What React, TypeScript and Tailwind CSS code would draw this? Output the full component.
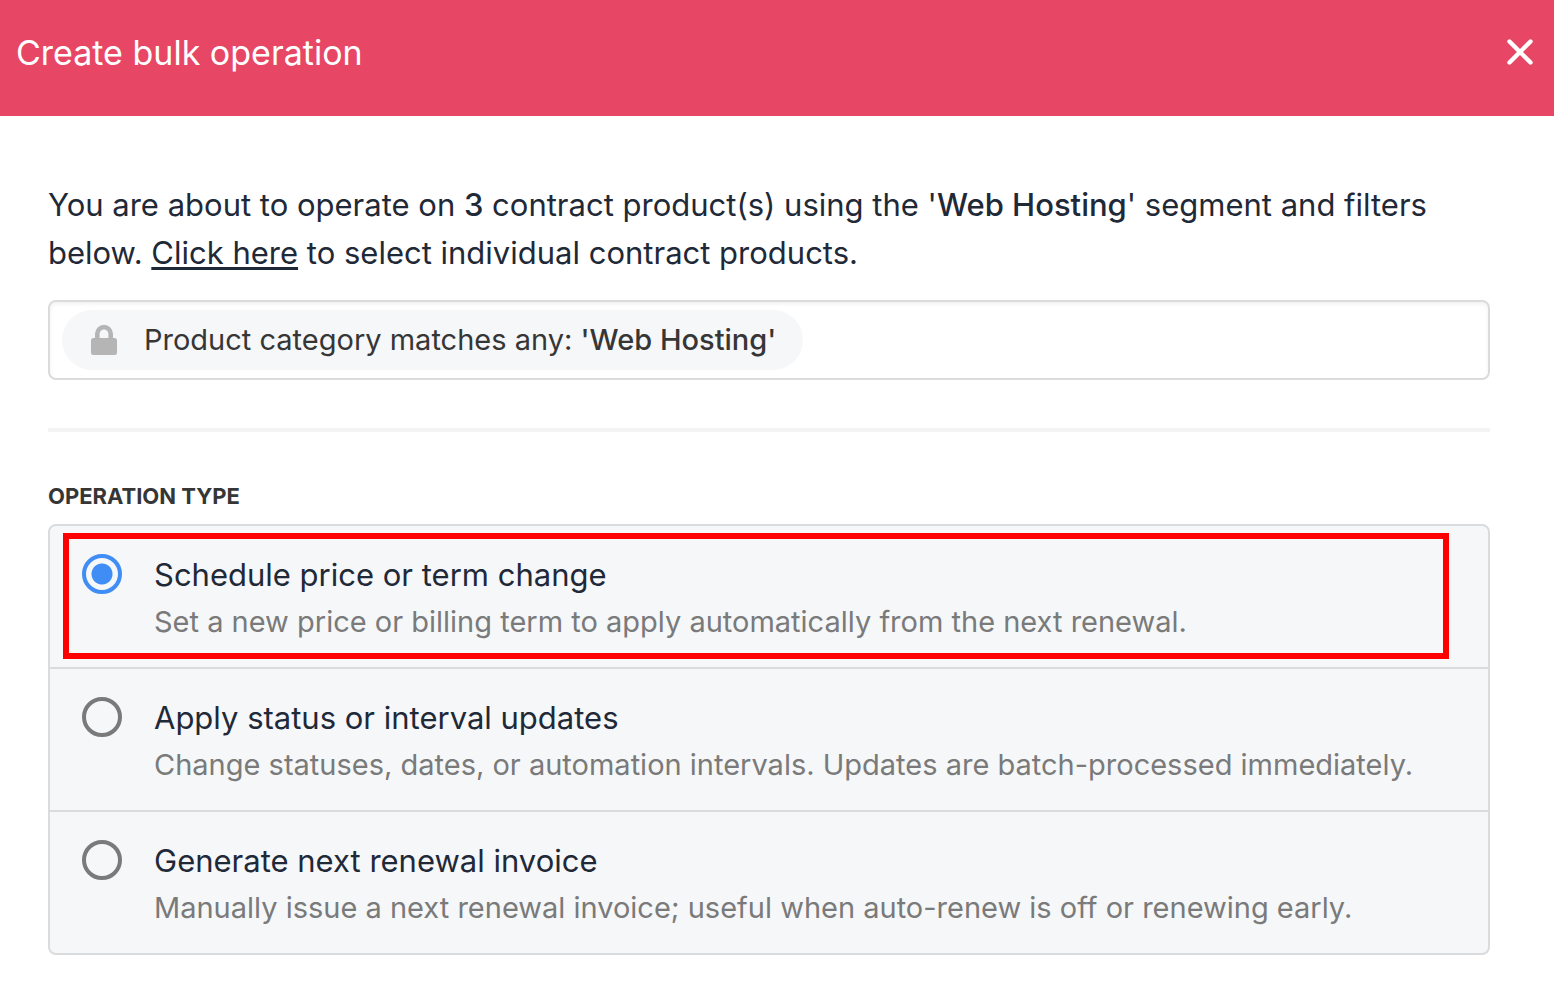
import { useState } from "react";

interface Operation {
  id: string;
  title: string;
  description: string;
}

const OPERATIONS: Operation[] = [
  {
    id: "schedule",
    title: "Schedule price or term change",
    description: "Set a new price or billing term to apply automatically from the next renewal.",
  },
  {
    id: "status",
    title: "Apply status or interval updates",
    description:
      "Change statuses, dates, or automation intervals. Updates are batch-processed immediately.",
  },
  {
    id: "invoice",
    title: "Generate next renewal invoice",
    description:
      "Manually issue a next renewal invoice; useful when auto-renew is off or renewing early.",
  },
];

function Header() {
  return (
    <header className="flex items-start justify-between bg-[#e74665] pt-7 pr-[18px] pb-[38px] pl-4 text-white">
      <h1 className="text-[34px] leading-[50px]">Create bulk operation</h1>
      <button type="button" aria-label="Close" className="mt-2 size-8">
        <svg
          viewBox="0 0 32 32"
          className="size-8"
          fill="none"
          stroke="currentColor"
          strokeWidth="4.4"
          strokeLinecap="round"
        >
          <path d="M5.500 5.500 26.500 26.500M26.500 5.500 5.500 26.500" />
        </svg>
      </button>
    </header>
  );
}

function FilterBox() {
  return (
    <div className="mt-[23px] flex h-20 items-center rounded-lg border-2 border-[#dadbdc] px-3 shadow-[inset_0_2px_4px_rgba(0,0,0,0.06)]">
      <div className="flex h-15 items-center rounded-full bg-[#f5f7f9] pr-[27px] pl-7 text-[29px] text-[#363636]">
        <svg viewBox="0 0 28 32" className="mr-[26px] h-8 w-7" fill="#b5b5b5" aria-hidden="true">
          <path d="M3.500 14h21a2.500 2.500 0 0 1 2.500 2.500v12a2.500 2.500 0 0 1-2.500 2.500h-21a2.500 2.500 0 0 1-2.500-2.500v-12A2.500 2.500 0 0 1 3.500 14z" />
          <path d="M7.300 15V9.800a6.700 6.700 0 0 1 13.400 0V15" fill="none" stroke="#b5b5b5" strokeWidth="4.600" />
        </svg>
        <p>
          Product category matches any: <span className="font-medium">'Web Hosting'</span>
        </p>
      </div>
    </div>
  );
}

interface OperationOptionProps {
  operation: Operation;
  checked: boolean;
  onSelect: (id: string) => void;
}

function OperationOption({ operation, checked, onSelect }: OperationOptionProps) {
  return (
    <label className="flex cursor-pointer items-start gap-8 px-8 pt-7 pb-[23px]">
      <input
        type="radio"
        name="operation"
        value={operation.id}
        checked={checked}
        onChange={() => onSelect(operation.id)}
        className="size-10 shrink-0 appearance-none rounded-full border-4 border-[#7a7a7a] checked:border-[#418df6] checked:bg-[radial-gradient(circle,#418df6_10px,transparent_11px)]"
      />
      <span className="flex flex-col gap-1">
        <span className="text-[31px] leading-[42px] text-[#1f2937]">{operation.title}</span>
        <span className="text-[29px] leading-11 text-[#7a7a7a]">{operation.description}</span>
      </span>
    </label>
  );
}

export default function App() {
  const [selected, setSelected] = useState("schedule");

  return (
    <div className="min-h-screen bg-white font-['Inter',sans-serif]">
      <Header />
      <main className="pt-[65px] pr-16 pb-8 pl-12">
        <p className="text-[31px] leading-12 text-[#1f2937]">
          You are about to operate on <span className="font-medium">3</span> contract product(s) using
          the '<span className="font-medium">Web Hosting</span>' segment and filters below.{" "}
          <a href="#products" className="underline decoration-3 underline-offset-3">
            Click here
          </a>{" "}
          to select individual contract products.
        </p>
        <FilterBox />
        <hr className="mt-12 border-t-4 border-[#f4f4f4]" />
        <fieldset className="mt-12">
          <legend className="text-[22px] leading-8 font-bold text-[#363636] uppercase">
            Operation type
          </legend>
          <div className="relative mt-3 rounded-lg border-2 border-[#dadbdc] bg-[#f5f7f9]">
            <div className="divide-y-2 divide-[#dadbdc]">
              {OPERATIONS.map((operation) => (
                <OperationOption
                  key={operation.id}
                  operation={operation}
                  checked={operation.id === selected}
                  onSelect={setSelected}
                />
              ))}
            </div>
            <div className="pointer-events-none absolute top-[7px] right-[39px] left-[13px] h-[126px] border-6 border-[#ff0000]" />
          </div>
        </fieldset>
      </main>
    </div>
  );
}
